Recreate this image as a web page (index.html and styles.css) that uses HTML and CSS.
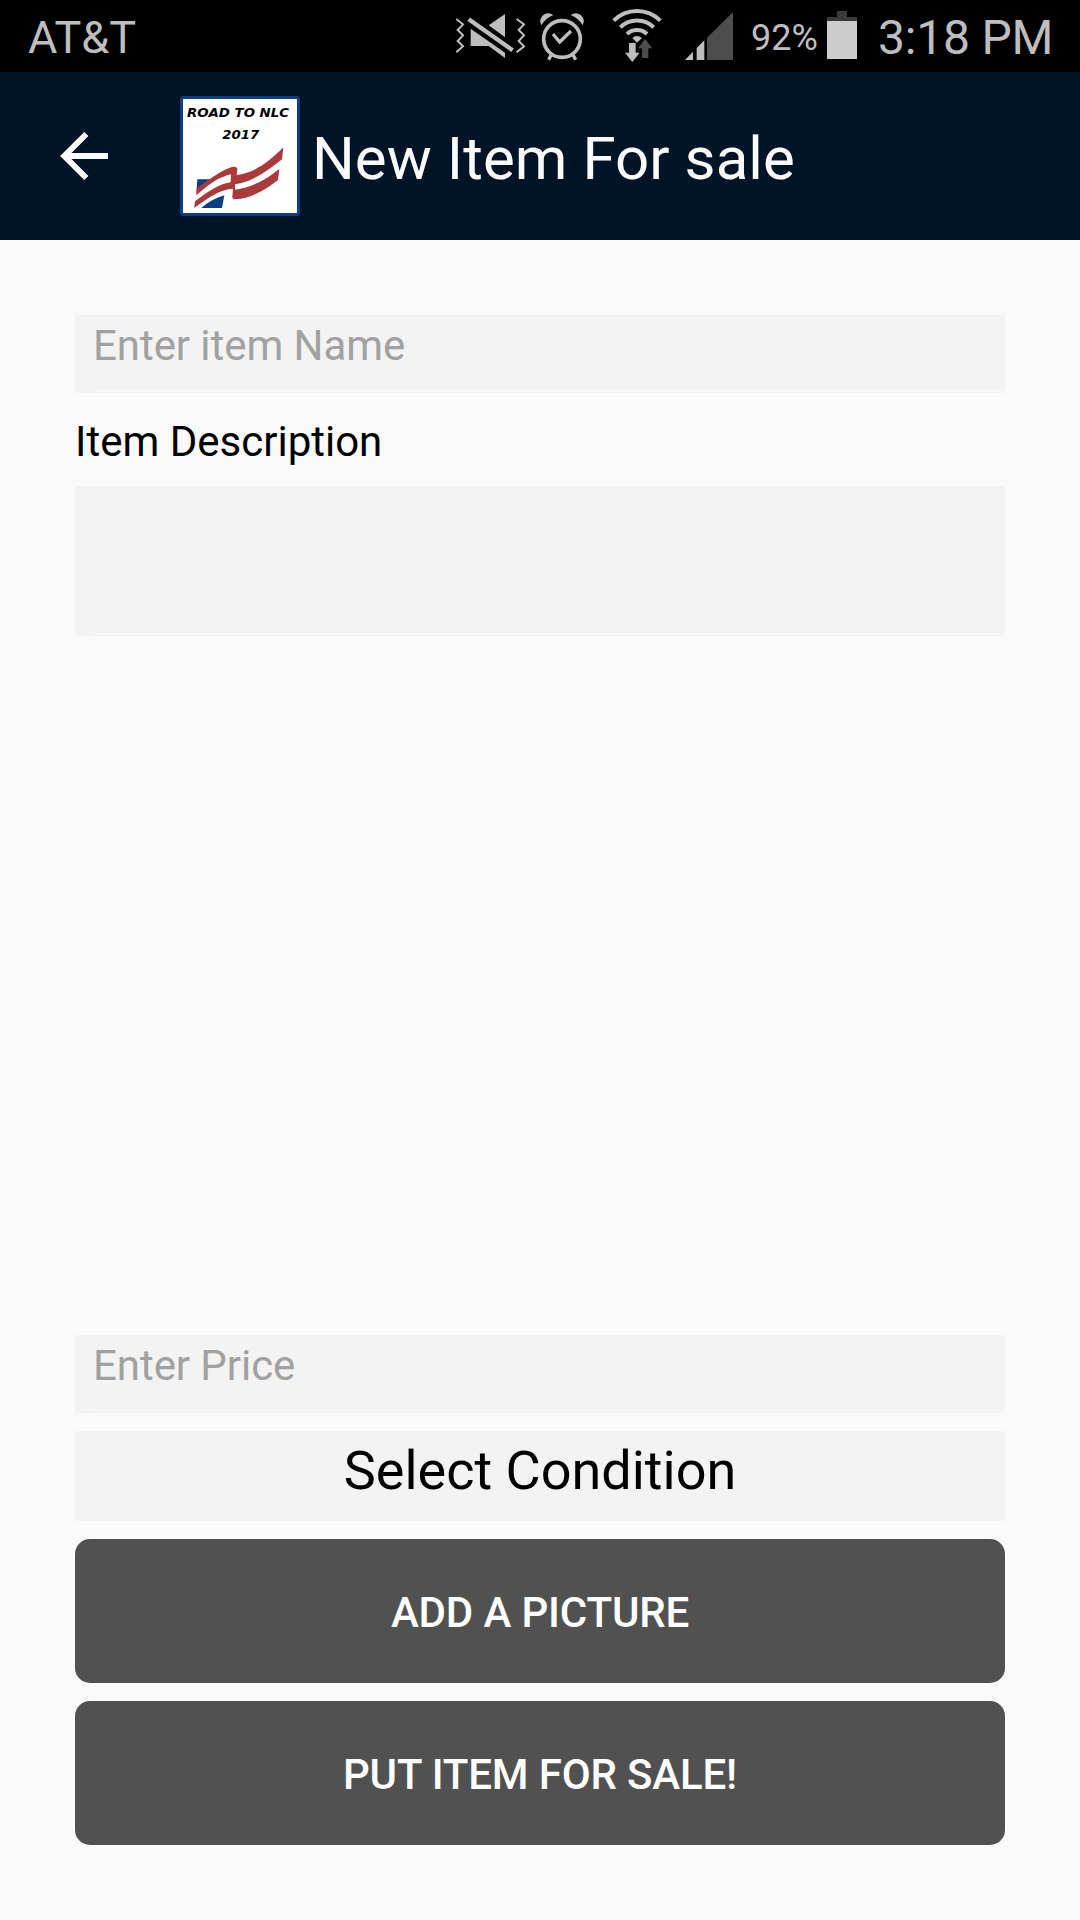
FILE: index.html
```html
<!DOCTYPE html>
<html lang="en">
<head>
<meta charset="utf-8">
<title>New Item For sale</title>
<link rel="stylesheet" href="styles.css">
</head>
<body>
<div class="screen">
  <div class="status-bar">
    <span class="carrier">AT&amp;T</span>
    <svg class="icon-mute" viewBox="42 0 216 216" fill="#bebebe">
      <g fill="none" stroke="#bebebe" stroke-width="6">
        <path d="M49 57L69 73L53 90L69 106L53 123L69 139L49 157"/>
        <path d="M230 57L252 73L236 90L252 106L236 123L252 139L230 157"/>
        <path d="M86 58L218 151" stroke-width="13"/>
      </g>
      <path d="M146 76L195 42V112Z"/>
      <path d="M92 86L195 158V174L146 138H92Z"/>
    </svg>
    <svg class="icon-alarm" viewBox="294 0 144 216" fill="none" stroke="#bebebe">
      <circle cx="366" cy="117" r="55" stroke-width="11"/>
      <path d="M339 102L359 126L393 93" stroke-width="10"/>
      <path d="M334 164L326 179M399 164L407 179" stroke-width="10"/>
      <path d="M304 76Q295 59 309 46Q323 34 340 45Q318 53 304 76ZM428 76Q437 59 423 46Q409 34 392 45Q414 53 428 76Z" fill="#bebebe" stroke="none"/>
    </svg>
    <svg class="icon-wifi" viewBox="510 0 162 216" fill="none" stroke="#bebebe" stroke-width="12">
      <path d="M521 62A99 99 0 0 1 661 62M541 82A71 71 0 0 1 641 82M561 102A44 44 0 0 1 621 102"/>
      <path d="M591 128L577 114Q591 102 606 114Z" fill="#bebebe" stroke="none"/>
      <path d="M615 117L637 145H625V174H606V145H594Z" fill="#4d4d4d" stroke="none"/>
      <path d="M567 129H587V158H599L577 186L555 158H567Z" fill="#bebebe" stroke="none"/>
    </svg>
    <svg class="icon-signal" viewBox="732 0 150 216" fill="#bebebe">
      <path d="M735 180L759 155V180ZM770 180V144L793 121V180Z"/>
      <path d="M801 180V113L879 36V180Z" fill="#4d4d4d"/>
    </svg>
    <span class="percent">92%</span>
    <svg class="icon-battery" viewBox="261 0 90 216">
      <path d="M291 33H321V51H351V63H261V51H291Z" fill="#3a3a3a"/>
      <path d="M261 63H351V177H261Z" fill="#cdcdcd"/>
    </svg>
    <span class="clock">3:18 PM</span>
  </div>

  <div class="app-bar">
    <svg class="back" viewBox="180 393 144 150" fill="none" stroke="#fafafa" stroke-width="18">
      <path d="M198 468H324M259 402L193 468L259 534"/>
    </svg>
    <svg class="logo" viewBox="540 288 360 360">
      <rect x="540" y="288" width="360" height="360" rx="12" fill="#0b3e84"/>
      <rect x="549" y="297" width="342" height="342" fill="#fff"/>
      <text x="561" y="352" textLength="306" lengthAdjust="spacingAndGlyphs" class="logo-text">ROAD TO NLC</text>
      <text x="667" y="417" textLength="111" lengthAdjust="spacingAndGlyphs" class="logo-text">2017</text>
      <path d="M592 538H636L590 568ZM604 624Q634 597 673 586L666 624Z" fill="#0b3e84"/>
      <path d="M589 566C622 544 655 515 695 501Q712 497 712 508L710 525C764 518 804 488 850 442L846 478C803 513 756 546 705 553L705 569C756 562 799 539 838 507L834 540C796 571 752 595 706 598Q697 598 697 591L699 566C662 568 624 592 583 624L585 604C622 577 653 553 692 547L693 523C656 530 622 557 589 586Z" fill="#ab383a"/>
    </svg>
    <h1 class="title">New Item For sale</h1>
  </div>

  <main class="form">
    <div class="field">Enter item Name</div>
    <div class="label">Item Description</div>
    <div class="field description"></div>
    <div class="field price">Enter Price</div>
    <div class="select">Select Condition</div>
    <div class="button">ADD A PICTURE</div>
    <div class="button">PUT ITEM FOR SALE!</div>
  </main>
</div>
</body>
</html>
```
FILE: styles.css
```css
* { box-sizing: border-box; }

body {
  margin: 0;
  background: #fafafa;
  font-family: Roboto, sans-serif;
}

.screen {
  display: flex;
  flex-direction: column;
  width: 1080px;
  height: 1920px;
}

.status-bar {
  display: flex;
  align-items: flex-start;
  height: 72px;
  padding-left: 28px;
  background: #000;
  color: #bebebe;
  white-space: nowrap;
}
.status-bar > * { flex: none; }
.status-bar svg { height: 72px; }

.carrier { width: 426px; font-size: 45px; line-height: 75px; }
.icon-mute { width: 72px; margin-right: 12px; }
.icon-alarm { width: 48px; margin-right: 24px; }
.icon-wifi { width: 54px; margin-right: 20px; }
.icon-signal { width: 50px; margin-right: 17px; }
.percent { width: 76px; font-size: 36px; line-height: 76px; }
.icon-battery { width: 30px; margin-right: 21px; }
.clock { font-size: 48px; line-height: 76px; letter-spacing: -0.2px; }

.app-bar {
  display: flex;
  align-items: center;
  height: 168px;
  padding-left: 60px;
  background: #001427;
}
.back { width: 48px; height: 50px; margin-right: 72px; }
.logo { width: 120px; height: 120px; margin-right: 12px; }
.logo-text { font: italic bold 36px "DejaVu Sans", sans-serif; }
.title {
  margin: 0;
  padding-top: 6px;
  color: #fafafa;
  font-size: 60px;
  font-weight: 400;
  line-height: 70px;
  letter-spacing: 0.06px;
}

.form {
  display: flex;
  flex: 1;
  flex-direction: column;
  padding: 75px;
}

.field {
  height: 78px;
  padding: 6px 18px 0;
  border-radius: 2px;
  background: linear-gradient(#f7f7f7, #f7f7f7) 18px calc(100% - 1px) / 100% 2px no-repeat #f3f3f3;
  color: #a1a1a1;
  font-size: 42px;
  line-height: 49px;
  letter-spacing: -0.06px;
}

.label {
  height: 93px;
  padding-top: 24px;
  color: #000;
  font-size: 42px;
  line-height: 49px;
}

.description { height: 150px; }
.price { margin-top: auto; }

.select {
  height: 90px;
  margin-top: 18px;
  padding-top: 8px;
  border-radius: 2px;
  background: #f3f3f3;
  color: #000;
  font-size: 54px;
  line-height: 64px;
  text-align: center;
}

.button {
  height: 144px;
  margin-top: 18px;
  padding-top: 2px;
  border-radius: 15px;
  background: #515151;
  color: #fff;
  font-size: 42px;
  font-weight: 500;
  line-height: 144px;
  letter-spacing: -0.15px;
  text-align: center;
}
```
